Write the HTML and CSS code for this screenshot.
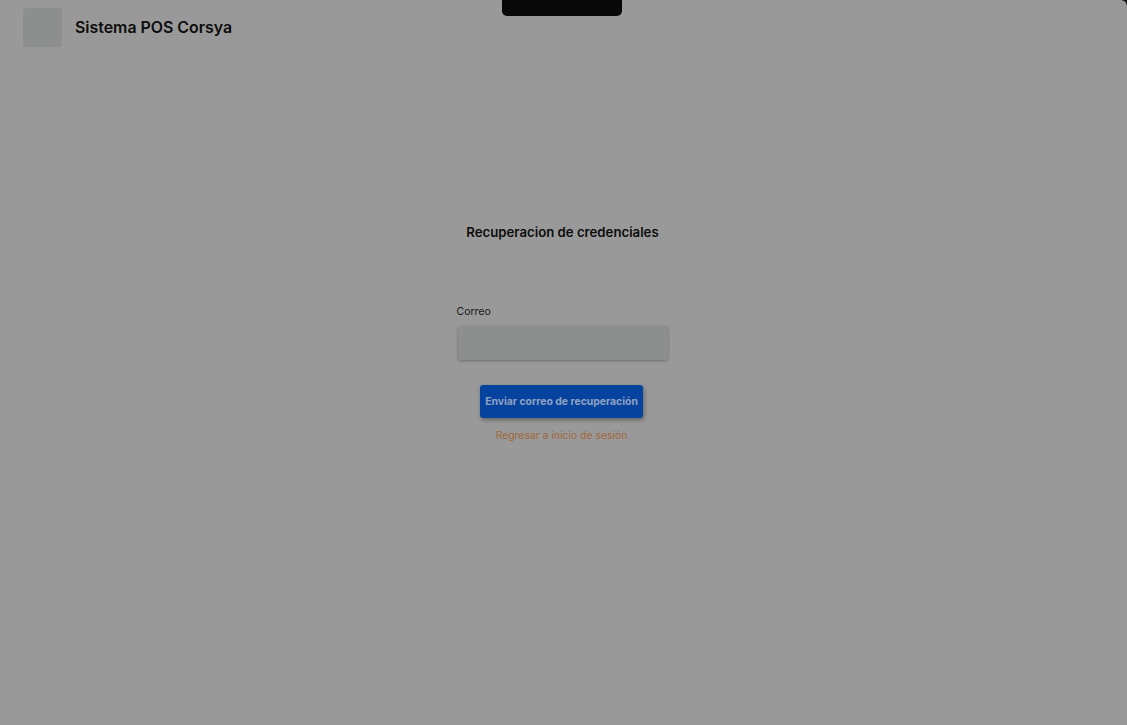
FILE: index.html
```html
<!DOCTYPE html>
<html lang="es">
<head>
  <meta charset="UTF-8" />
  <meta name="viewport" content="width=device-width, initial-scale=1.0"/>
  <title>Sistema POS Corsya</title>
  <link rel="stylesheet" href="styles.css">
</head>
<body>

<div class="notch"></div>
<div class="corner"></div>

<!-- Header -->
<header class="top-bar">
  <div class="logo"></div>
  <h1>Sistema POS Corsya</h1>
</header>

<!-- Recovery form -->
<main class="recover">
  <h2>Recuperacion de credenciales</h2>
  <form class="recover-form">
    <label for="correo">Correo</label>
    <input type="text" id="correo" />
    <button type="button" class="send-btn">Enviar correo de recuperación</button>
    <a href="#" class="back-link">Regresar a inicio de sesión</a>
  </form>
</main>

</body>
</html>
```

FILE: styles.css
```css
:root {
  --bg: #999999;
  --field: #8c8f8d;
  --text: #0d0d0d;
  --blue: #05439f;
  --font: 'Inter', 'Liberation Sans', sans-serif;
}

* {
  box-sizing: border-box;
  margin: 0;
  padding: 0;
  font-family: var(--font);
}

html, body {
  height: 100%;
}

body {
  background: var(--bg);
  color: var(--text);
  overflow: hidden;
  position: relative;
}

.notch {
  position: absolute;
  top: 0;
  left: 502px;
  width: 120px;
  height: 16px;
  background: #080808;
  border-radius: 0 0 5px 5px;
}

.corner {
  position: absolute;
  top: 0;
  right: 0;
  width: 5px;
  height: 5px;
  background: radial-gradient(circle at 0 100%, transparent 4px, #111 5px);
}

/* Header */
.top-bar {
  display: flex;
  align-items: center;
  gap: 13px;
  padding: 8px 23px;
}

.logo {
  width: 39px;
  height: 39px;
  background: var(--field);
  border-radius: 3px;
}

.top-bar h1 {
  font-size: 15.9px;
  font-weight: 600;
  line-height: 20px;
  padding-top: 1px;
}

/* Recovery form */
.recover {
  display: flex;
  flex-direction: column;
  align-items: center;
  padding: 168px 2px 0 0;
}

.recover h2 {
  font-size: 13.2px;
  font-weight: 600;
  line-height: 18px;
  margin-bottom: 64px;
}

.recover-form {
  width: 212px;
  display: flex;
  flex-direction: column;
  align-items: center;
}

.recover-form label {
  align-self: flex-start;
  font-size: 10.5px;
  line-height: 14px;
  margin-bottom: 7px;
  color: #1a1a1a;
}

.recover-form input {
  width: 210px;
  height: 34px;
  background: var(--field);
  border: none;
  border-radius: 3px;
  box-shadow: 0 1px 3px rgba(0, 0, 0, 0.3);
  margin-bottom: 25px;
  outline: none;
}

.send-btn {
  width: 163px;
  height: 33px;
  background: var(--blue);
  color: #8fa2c2;
  border: none;
  border-radius: 3px;
  font-size: 10.4px;
  font-weight: 700;
  box-shadow: 1px 2px 4px rgba(0, 0, 0, 0.35);
  margin: 0 2px 11px 0;
}

.back-link {
  font-size: 10.4px;
  line-height: 14px;
  color: #a0683a;
  text-decoration: none;
  margin-right: 2px;
}
```
